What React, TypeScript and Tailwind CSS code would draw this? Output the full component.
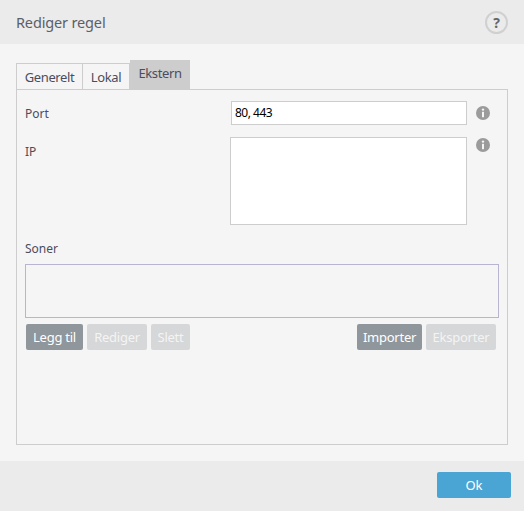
export default function App() {
  const font = { fontFamily: '"Noto Sans", sans-serif' };
  const Info = () => (
    <svg width="14" height="14" viewBox="0 0 14 14" className="block">
      <circle cx="7" cy="7" r="7" fill="#9b9b9b" />
      <circle cx="7" cy="3.6" r="1.2" fill="#f5f5f5" />
      <rect x="6" y="5.8" width="2" height="5.4" fill="#f5f5f5" />
    </svg>
  );
  const Btn = ({ label, w, on }: { label: string; w: string; on?: boolean }) => (
    <div className={`${w} h-[26px] pt-[2px] rounded-[2px] flex items-center justify-center text-[13px] tracking-[-0.25px] ${on ? "bg-[#8f969c] text-white" : "bg-[#d6d7d8] text-[#f4f4f4]"}`}>{label}</div>
  );
  return (
    <div className="w-[524px] h-[511px] flex flex-col bg-[#f5f5f5] text-[#4c4c5c] overflow-hidden antialiased" style={font}>
      <div className="h-[44px] bg-[#ebebeb] flex items-center justify-between pl-[16px] pr-[16px]">
        <div className="text-[14.5px] tracking-[-0.15px] pt-[2px] text-[#5a6068]">Rediger regel</div>
        <div className="w-[23px] h-[23px] rounded-full border-2 border-[#d0d0d0] flex items-center justify-center text-[14px] font-bold text-[#666]">?</div>
      </div>
      <div className="flex-1 px-[16px] pt-[16px]">
        <div className="flex items-end h-[29px] text-[13px] tracking-[-0.4px]">
          <div className="w-[67px] h-[26px] border border-b-0 border-[#cdcdcd] flex items-center justify-center pt-[2px]">Generelt</div>
          <div className="w-[47px] h-[26px] border border-b-0 border-l-0 border-[#cdcdcd] flex items-center justify-center pt-[2px]">Lokal</div>
          <div className="w-[60px] h-[29px] bg-[#cdcdcd] flex items-center justify-center pb-[1px]">Ekstern</div>
        </div>
        <div className="w-[492px] h-[356px] border border-[#cdcdcd] px-[8px] pt-[11px]">
          <div className="flex items-center h-[24px] text-[12px]">
            <div className="w-[206px] pt-[2px]">Port</div>
            <div className="w-[236px] h-[24px] bg-white border border-[#cdcdcd] flex items-center pl-[3px] text-[12px] tracking-[-0.5px] text-black">80, 443</div>
            <div className="ml-[9px]"><Info /></div>
          </div>
          <div className="flex items-start h-[88px] mt-[12px] text-[12px]">
            <div className="w-[205px] pt-[6px]">IP</div>
            <div className="w-[237px] h-[88px] bg-white border border-[#cdcdcd]"></div>
            <div className="ml-[9px] mt-[1px]"><Info /></div>
          </div>
          <div className="mt-[14px] h-[18px] pt-[2px] text-[12px] flex items-center">Soner</div>
          <div className="mt-[7px] w-[474px] h-[54px] border border-[#b9b5d0]"></div>
          <div className="mt-[6px] flex pl-[1px] gap-[4px]">
            <Btn label="Legg til" w="w-[57px]" on />
            <Btn label="Rediger" w="w-[60px]" />
            <Btn label="Slett" w="w-[39px]" />
            <div className="w-[159px]"></div>
            <Btn label="Importer" w="w-[65px]" on />
            <Btn label="Eksporter" w="w-[70px]" />
          </div>
        </div>
      </div>
      <div className="h-[50px] bg-[#ebebeb] flex justify-end pt-[11px] pr-[13px]">
        <div className="w-[74px] h-[26px] pt-[2px] bg-[#4aa5d5] rounded-[2px] flex items-center justify-center text-[13px] text-white">Ok</div>
      </div>
    </div>
  );
}
